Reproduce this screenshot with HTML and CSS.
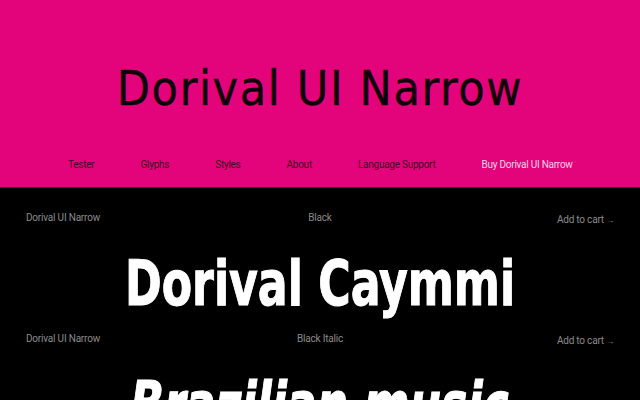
FILE: index.html
```html
<!DOCTYPE html>
<html lang="en">
<head>
<meta charset="utf-8">
<link rel="stylesheet" href="styles.css">
</head>
<body>
<header class="hero">
  <h1 class="hero-title">Dorival UI Narrow</h1>
  <nav class="nav">
    <a class="nav-link">Tester</a>
    <a class="nav-link">Glyphs</a>
    <a class="nav-link">Styles</a>
    <a class="nav-link">About</a>
    <a class="nav-link">Language Support</a>
    <a class="nav-link nav-buy">Buy Dorival UI Narrow</a>
  </nav>
</header>
<main class="styles">
  <section class="style-row">
    <div class="meta">
      <span class="meta-family">Dorival UI Narrow</span>
      <span class="meta-style">Black</span>
      <span class="meta-cart">Add to cart <span class="arrow">→</span></span>
    </div>
    <div class="sample"><span class="sample-text">Dorival Caymmi</span></div>
  </section>
  <section class="style-row">
    <div class="meta">
      <span class="meta-family">Dorival UI Narrow</span>
      <span class="meta-style">Black Italic</span>
      <span class="meta-cart">Add to cart <span class="arrow">→</span></span>
    </div>
    <div class="sample"><span class="sample-text sample-italic">Brazilian music</span></div>
  </section>
</main>
</body>
</html>
```
FILE: styles.css
```css
html, body {
  margin: 0;
  padding: 0;
  background: #000;
  overflow: hidden;
}
body {
  font-family: Roboto, "Liberation Sans", sans-serif;
  width: 640px;
  height: 400px;
}
.hero {
  background: #e3037a;
  height: 187px;
  border-bottom: 1px solid #5a0a30;
  display: flex;
  flex-direction: column;
  align-items: center;
}
.hero-title {
  margin: 56px 0 0;
  font-family: "DejaVu Sans Condensed", "DejaVu Sans", sans-serif;
  font-stretch: condensed;
  font-weight: 400;
  font-size: 48px;
  line-height: 64px;
  color: #0e0008;
  letter-spacing: 1.6px;
  -webkit-text-stroke: 0.4px #0e0008;
}
.nav {
  margin-top: 38px;
  display: flex;
  gap: 46px;
  width: 100%;
  padding-left: 68px;
  box-sizing: border-box;
  font-size: 10px;
  line-height: 14px;
  letter-spacing: -0.25px;
}
.nav-link {
  color: #3d0622;
}
.nav-buy {
  color: #fbd3e8;
}
.style-row {
  display: flex;
  flex-direction: column;
}
.meta {
  display: grid;
  grid-template-columns: 1fr auto 1fr;
  padding: 23px 26px 0;
  font-size: 10px;
  line-height: 14px;
  color: #8a8a8a;
  letter-spacing: -0.2px;
}
.meta-style { text-align: center; }
.meta-cart { text-align: right; padding-top: 2px; }
.arrow { font-size: 8px; }
.sample {
  display: flex;
  justify-content: center;
  height: 81px;
}
.sample-text {
  display: inline-block;
  font-family: "DejaVu Sans Condensed", "DejaVu Sans", sans-serif;
  font-stretch: condensed;
  color: #fff;
  font-weight: 900;
  font-size: 63px;
  line-height: 84px;
  height: 84px;
  padding-top: 14px;
  transform: scaleX(0.78);
  white-space: nowrap;
  -webkit-text-stroke: 1px #fff;
}
.sample-italic { font-style: italic; }
```
